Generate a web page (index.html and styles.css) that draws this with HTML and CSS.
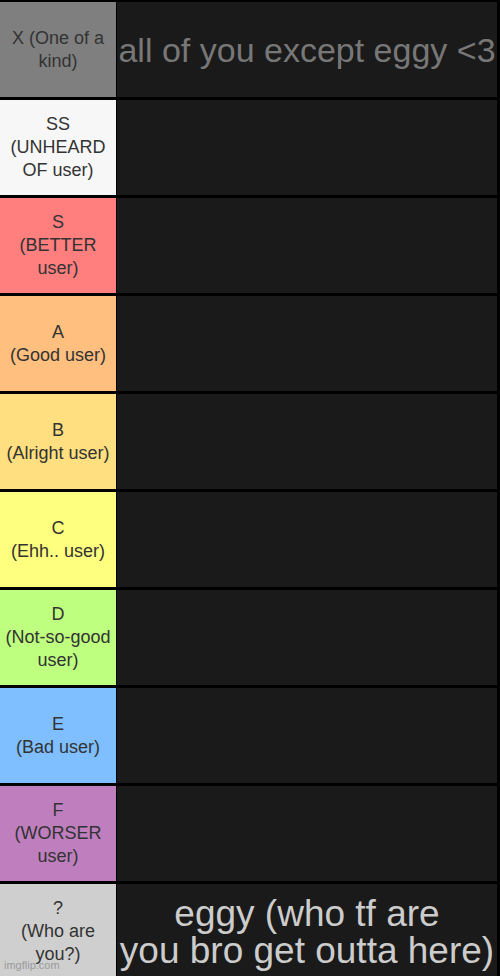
FILE: index.html
```html
<!DOCTYPE html>
<html lang="en">
<head>
    <meta charset="UTF-8">
    <meta name="viewport" content="width=device-width, initial-scale=1.0">
    <title>Tier list</title>
    <link rel="stylesheet" href="styles.css">
</head>
<body>
    <div class="tier-list">
        <!-- X tier -->
        <div class="tier">
            <div class="tier-label tier-x">X (One of a kind)</div>
            <div class="tier-items"><span class="item-text muted">all of you except eggy &lt;3</span></div>
        </div>
        <div class="tier">
            <div class="tier-label tier-ss">SS (UNHEARD OF user)</div>
            <div class="tier-items"></div>
        </div>
        <div class="tier">
            <div class="tier-label tier-s">S<br>(BETTER user)</div>
            <div class="tier-items"></div>
        </div>
        <div class="tier">
            <div class="tier-label tier-a">A<br>(Good user)</div>
            <div class="tier-items"></div>
        </div>
        <div class="tier">
            <div class="tier-label tier-b">B<br>(Alright user)</div>
            <div class="tier-items"></div>
        </div>
        <div class="tier">
            <div class="tier-label tier-c">C<br>(Ehh.. user)</div>
            <div class="tier-items"></div>
        </div>
        <div class="tier">
            <div class="tier-label tier-d">D<br>(Not-so-good user)</div>
            <div class="tier-items"></div>
        </div>
        <div class="tier">
            <div class="tier-label tier-e">E<br>(Bad user)</div>
            <div class="tier-items"></div>
        </div>
        <div class="tier">
            <div class="tier-label tier-f">F<br>(WORSER user)</div>
            <div class="tier-items"></div>
        </div>
        <!-- unknown tier -->
        <div class="tier">
            <div class="tier-label tier-unknown">?<br>(Who are you?)</div>
            <div class="tier-items"><span class="item-text light">eggy (who tf are<br>you bro get outta here)</span></div>
        </div>
    </div>

    <div class="watermark">imgflip.com</div>
</body>
</html>
```

FILE: styles.css
```css
:root {
    --cell-dark: #1a1a1a;
    --label-text: #333333;
}

* {
    box-sizing: border-box;
    margin: 0;
    padding: 0;
    font-family: 'Liberation Sans', Arial, sans-serif;
}

html, body {
    height: 976px;
    overflow: hidden;
}

body {
    background: #000;
    position: relative;
}

.tier-list {
    display: flex;
    flex-direction: column;
    gap: 3px;
    padding: 2px 3px 0 0;
}

.tier {
    display: grid;
    grid-template-columns: 116px 1fr;
    column-gap: 1px;
    height: 95px;
    flex-shrink: 0;
}

.tier-label {
    display: flex;
    align-items: center;
    justify-content: center;
    text-align: center;
    padding: 0 4px;
    font-size: 18px;
    line-height: 23px;
    color: var(--label-text);
}

.tier-x { background: #7f7f7f; }
.tier-ss { background: #f7f7f7; }
.tier-s { background: #ff7f7f; }
.tier-a { background: #ffbf7f; }
.tier-b { background: #ffdf7f; }
.tier-c { background: #ffff7f; }
.tier-d { background: #bfff7f; }
.tier-e { background: #7fbfff; }
.tier-f { background: #bf7fbf; }
.tier-unknown { background: #cfcfcf; }

.tier-items {
    background: var(--cell-dark);
    display: flex;
    align-items: center;
    justify-content: center;
    text-align: center;
    overflow: hidden;
}

.item-text {
    white-space: nowrap;
}

.muted {
    font-size: 34px;
    line-height: 38px;
    color: #777777;
}

.light {
    font-size: 37px;
    line-height: 37px;
    color: #cccccc;
}

.watermark {
    position: absolute;
    left: 4px;
    top: 959px;
    font-size: 11px;
    line-height: 13px;
    color: #9a9a9a;
}
```
